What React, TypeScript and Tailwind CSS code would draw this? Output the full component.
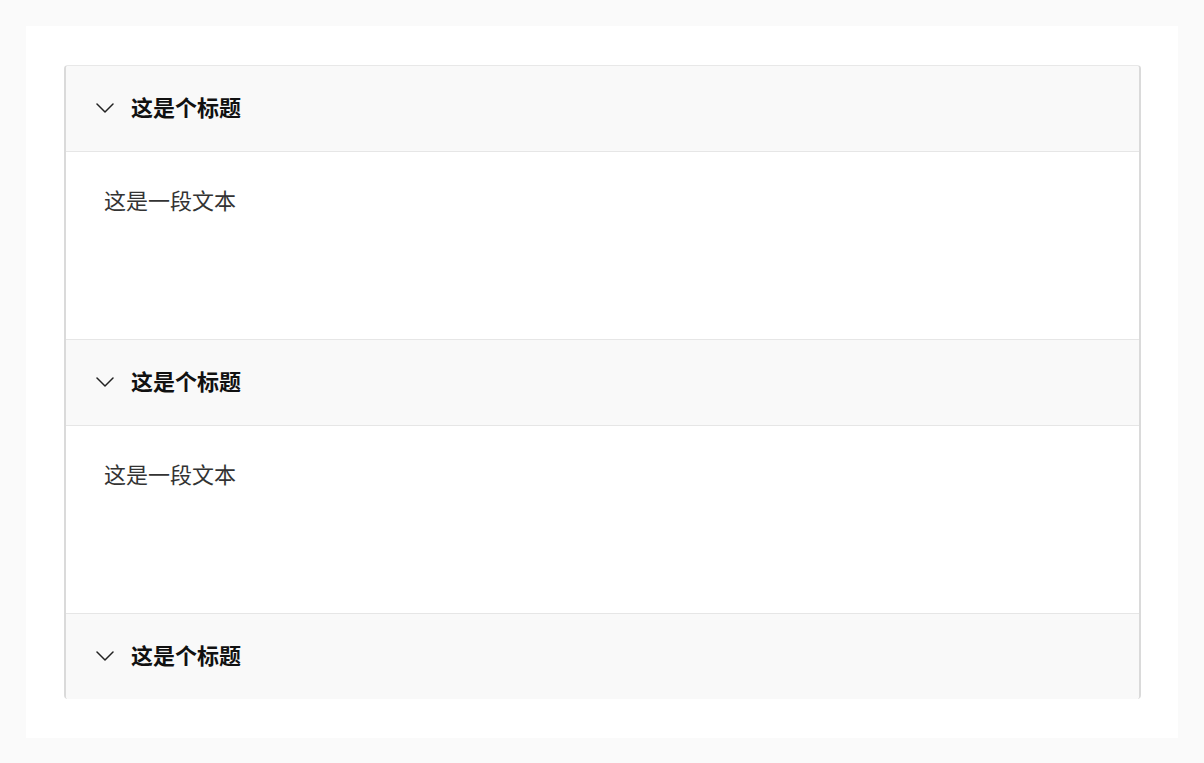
import React from "react"

const items = [
  { title: "这是个标题", body: "这是一段文本", open: true },
  { title: "这是个标题", body: "这是一段文本", open: true },
  { title: "这是个标题", body: "这是一段文本", open: false },
]

function Chevron() {
  return (
    <svg width="18" height="10" viewBox="0 0 18 10" fill="none" className="shrink-0">
      <path d="M1 1l8 8 8-8" stroke="#222" strokeWidth="1.5" strokeLinecap="round" strokeLinejoin="round" />
    </svg>
  )
}

export default function App() {
  return (
    <main
      className="min-h-screen bg-[#fafafa] p-[26px]"
      style={{ fontFamily: '"Noto Sans CJK SC", "Noto Sans", sans-serif' }}
    >
      <div className="bg-white pl-[38px] pr-[37px] py-[39px]">
        <div className="overflow-hidden rounded-[4px] border-t border-t-[#e8e8e8] border-x-2 border-x-[#dadada]">
          {items.map((item, i) => (
            <section key={i} className={i > 0 ? "border-t border-[#e6e6e6]" : ""}>
              <div className="flex h-[85px] items-center gap-[17px] bg-[#f9f9f9] pb-[2px] pl-[30px]">
                <Chevron />
                <h3 className="mb-[4px] text-[22px] font-bold leading-none text-[#111]">{item.title}</h3>
              </div>
              {item.open && (
                <div className="h-[188px] border-t border-[#e6e6e6] bg-white pl-[38px] pt-[31px]">
                  <p className="text-[22px] leading-[32px] text-[#333]">{item.body}</p>
                </div>
              )}
            </section>
          ))}
        </div>
      </div>
    </main>
  )
}
